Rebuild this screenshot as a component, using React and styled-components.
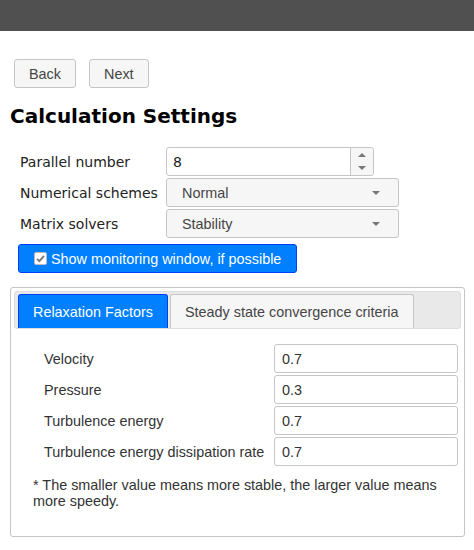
import React from 'react'
import styled, { createGlobalStyle } from 'styled-components'

const Global = createGlobalStyle`
  body {
    margin: 0;
    background: #fff;
    font-family: "Liberation Sans", Arial, sans-serif;
    color: #333;
  }
`

const factors = [
  { label: 'Velocity', value: '0.7' },
  { label: 'Pressure', value: '0.3' },
  { label: 'Turbulence energy', value: '0.7' },
  { label: 'Turbulence energy dissipation rate', value: '0.7' },
]

export default () => (
  <>
    <Global />
    <TopBar />
    <Page>
      <NavRow>
        <Button>Back</Button>
        <Button>Next</Button>
      </NavRow>
      <Title>Calculation Settings</Title>
      <Form>
        <Label>Parallel number</Label>
        <Spinner>
          <span>8</span>
          <SpinButtons>
            <Arrow $up />
            <Arrow />
          </SpinButtons>
        </Spinner>
        <Label>Numerical schemes</Label>
        <Select>
          <span>Normal</span>
          <Caret />
        </Select>
        <Label>Matrix solvers</Label>
        <Select>
          <span>Stability</span>
          <Caret />
        </Select>
      </Form>
      <CheckButton>
        <svg width="13" height="13" viewBox="0 0 13 13">
          <rect x="0.5" y="0.5" width="12" height="12" rx="1.5" fill="#fff" stroke="#bbb" />
          <path d="M3 6.8 L5.4 9.2 L10 3.8" fill="none" stroke="#777" strokeWidth="1.8" />
        </svg>
        Show monitoring window, if possible
      </CheckButton>
      <Tabs>
        <TabBar>
          <Tab $active>Relaxation Factors</Tab>
          <Tab>Steady state convergence criteria</Tab>
        </TabBar>
        <TabBody>
          <FactorGrid>
            {factors.map((f) => (
              <React.Fragment key={f.label}>
                <FactorLabel>{f.label}</FactorLabel>
                <TextBox>{f.value}</TextBox>
              </React.Fragment>
            ))}
          </FactorGrid>
          <Note>* The smaller value means more stable, the larger value means more speedy.</Note>
        </TabBody>
      </Tabs>
    </Page>
  </>
)

const TopBar = styled.div`
  height: 31px;
  background: #505050;
`

const Page = styled.div`
  padding: 28px 0 0 0;
`

const NavRow = styled.div`
  display: flex;
  gap: 13px;
  padding-left: 14px;
`

const Button = styled.button`
  height: 29px;
  padding: 0 14px;
  border: 1px solid #c5c5c5;
  border-radius: 3px;
  background: #f6f6f6;
  color: #454545;
  font-family: "Liberation Sans", Arial, sans-serif;
  font-size: 14.4px;
`

const Title = styled.h1`
  margin: 13px 0 0 10px;
  font-family: "DejaVu Sans", sans-serif;
  font-size: 20px;
  font-weight: bold;
  color: #000;
  line-height: 30px;
`

const Form = styled.div`
  display: grid;
  grid-template-columns: 146px 233px;
  row-gap: 2px;
  margin: 16px 0 0 20px;
`

const Label = styled.div`
  display: flex;
  align-items: center;
  height: 29px;
  font-family: "DejaVu Sans", sans-serif;
  font-size: 14px;
  color: #222;
`

const Spinner = styled.div`
  display: flex;
  align-items: center;
  justify-content: space-between;
  width: 208px;
  height: 29px;
  box-sizing: border-box;
  border: 1px solid #c5c5c5;
  border-radius: 3px;
  background: #fff;
  padding-left: 6px;
  font-family: "DejaVu Sans", sans-serif;
  font-size: 14px;
  color: #222;
`

const SpinButtons = styled.div`
  display: flex;
  flex-direction: column;
  justify-content: space-around;
  align-items: center;
  width: 22px;
  height: 100%;
  border-left: 1px solid #c5c5c5;
  background: #f6f6f6;
  border-radius: 0 3px 3px 0;
`

const Arrow = styled.span`
  width: 0;
  height: 0;
  border-left: 4px solid transparent;
  border-right: 4px solid transparent;
  ${(p) => (p.$up ? 'border-bottom: 4px solid #777;' : 'border-top: 4px solid #777;')}
`

const Select = styled.div`
  display: flex;
  align-items: center;
  justify-content: space-between;
  height: 29px;
  box-sizing: border-box;
  border: 1px solid #c5c5c5;
  border-radius: 3px;
  background: #f6f6f6;
  padding: 0 18px 0 15px;
  font-family: "Liberation Sans", Arial, sans-serif;
  font-size: 14.4px;
  color: #454545;
`

const Caret = styled.span`
  width: 0;
  height: 0;
  border-left: 4px solid transparent;
  border-right: 4px solid transparent;
  border-top: 4px solid #777;
`

const CheckButton = styled.div`
  display: inline-flex;
  align-items: center;
  gap: 4px;
  margin: 6px 0 0 18px;
  height: 29px;
  box-sizing: border-box;
  padding: 0 15px 0 15px;
  background: #007fff;
  border: 1px solid #003eff;
  border-radius: 3px;
  color: #fff;
  font-size: 14.4px;
`

const Tabs = styled.div`
  margin: 14px 0 0 10px;
  width: 455px;
  height: 250px;
  box-sizing: border-box;
  border: 1px solid #c5c5c5;
  border-radius: 3px;
  padding: 3px;
`

const TabBar = styled.div`
  display: flex;
  align-items: flex-end;
  gap: 2px;
  height: 38px;
  box-sizing: border-box;
  padding: 4px 0 0 3px;
  background: #e9e9e9;
  border: 1px solid #dddddd;
  border-radius: 3px;
`

const Tab = styled.div`
  display: flex;
  align-items: center;
  height: 34px;
  box-sizing: border-box;
  padding: 0 14px;
  border: 1px solid ${(p) => (p.$active ? '#003eff' : '#c5c5c5')};
  border-bottom: none;
  border-radius: 3px 3px 0 0;
  background: ${(p) => (p.$active ? '#007fff' : '#f6f6f6')};
  color: ${(p) => (p.$active ? '#fff' : '#454545')};
  font-size: 14.4px;
`

const TabBody = styled.div`
  padding: 15px 3px 0 19px;
`

const FactorGrid = styled.div`
  display: grid;
  grid-template-columns: 11px 230px 184px;
  row-gap: 2px;
  & > :nth-child(odd) {
    grid-column: 2;
  }
`

const FactorLabel = styled.div`
  display: flex;
  align-items: center;
  height: 29px;
  font-size: 14.4px;
  color: #333;
`

const TextBox = styled.div`
  display: flex;
  align-items: center;
  height: 29px;
  box-sizing: border-box;
  padding-left: 7px;
  border: 1px solid #c5c5c5;
  border-radius: 3px;
  background: #fff;
  font-size: 14.4px;
  color: #333;
`

const Note = styled.p`
  margin: 11px 0 0 0;
  font-size: 14.4px;
  line-height: 16px;
  color: #333;
`
